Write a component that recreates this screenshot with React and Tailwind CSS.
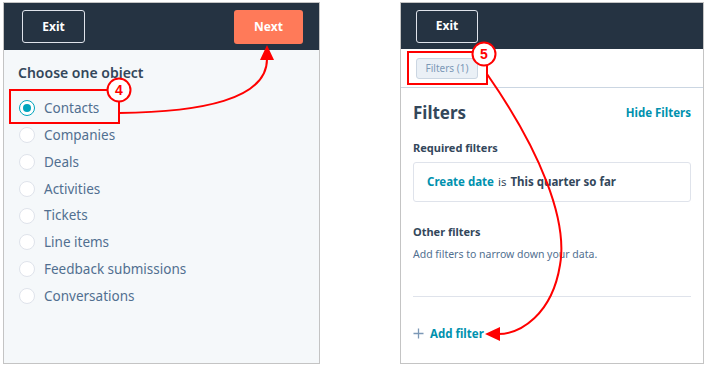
import React from "react";

const items = ["Contacts","Companies","Deals","Activities","Tickets","Line items","Feedback submissions","Conversations"];

function Radio({ checked }) {
  return (
    <span className={"flex h-[16px] w-[16px] shrink-0 items-center justify-center rounded-full border bg-white " + (checked ? "border-[#00a4bd]" : "border-[#dfe3eb]")}>
      {checked && <span className="h-[8px] w-[8px] rounded-full bg-[#00a4bd]" />}
    </span>
  );
}

export default function App() {
  return (
    <div className="relative h-[366px] w-[707px] overflow-hidden bg-white" style={{ fontFamily: '"Noto Sans", "Liberation Sans", sans-serif' }}>
      <div className="flex items-start pl-[3px] pt-[2px]">
        {/* Left panel */}
        <div className="flex h-[362px] w-[317px] flex-col border border-[#c4c4c4] bg-[#f5f8fa]">
          <div className="flex h-[47px] items-center justify-between bg-[#253342] pl-[18px] pr-[16px]">
            <div className="flex h-[33px] w-[63px] items-center justify-center rounded-[3px] border border-[#dfe3eb] text-[12px] font-bold text-white">Exit</div>
            <div className="flex h-[34px] w-[69px] items-center justify-center rounded-[3px] bg-[#ff7a59] text-[12px] font-bold text-white">Next</div>
          </div>
          <div className="px-[14px] pt-[14px]">
            <div className="text-[14px] font-semibold leading-[18px] text-[#33475b]">Choose one object</div>
            <div className="mt-[13px] flex flex-col">
              {items.map((t, i) => (
                <div key={t} className="flex h-[26.8px] items-center gap-[9px] pl-[1px]">
                  <Radio checked={i === 0} />
                  <span className="text-[13.5px] text-[#516f90]">{t}</span>
                </div>
              ))}
            </div>
          </div>
        </div>

        {/* Right panel */}
        <div className="ml-[80px] flex h-[362px] w-[304px] flex-col border border-[#c4c4c4] bg-white">
          <div className="flex h-[46px] items-center bg-[#253342] pl-[15px]">
            <div className="flex h-[33px] w-[62px] items-center justify-center rounded-[3px] border border-[#dfe3eb] text-[12px] font-bold text-white">Exit</div>
          </div>
          <div className="flex h-[39px] items-center border-b border-[#cbd6e2] pl-[15px]">
            <div className="flex h-[21px] w-[62px] items-center justify-center rounded-[3px] border border-[#cbd6e2] bg-[#eaf0f6] text-[10px] text-[#7c98b6]">Filters (1)</div>
          </div>
          <div className="flex flex-1 flex-col px-[12px] pt-[12px]">
            <div className="flex items-center justify-between">
              <span className="text-[17px] font-bold text-[#33475b]">Filters</span>
              <span className="text-[11.5px] font-bold text-[#0091ae]">Hide Filters</span>
            </div>
            <div className="mt-[14px] text-[11px] font-bold text-[#33475b]">Required filters</div>
            <div className="mt-[6px] flex h-[40px] items-center rounded-[3px] border border-[#dfe3eb] pl-[13px] text-[11.5px] text-[#33475b]">
              <span className="font-bold text-[#0091ae]">Create date</span>
              <span className="mx-[4px]">is</span>
              <span className="font-bold">This quarter so far</span>
            </div>
            <div className="mt-[22px] text-[11px] font-bold text-[#33475b]">Other filters</div>
            <div className="mt-[6px] text-[10.5px] text-[#516f90]">Add filters to narrow down your data.</div>
            <div className="mt-[34px] border-t border-[#dfe3eb]" />
            <div className="mt-[28px] flex items-center gap-[6px]">
              <svg width="11" height="11" viewBox="0 0 11 11" className="shrink-0">
                <path d="M5.5 0.5 V10.5 M0.5 5.5 H10.5" stroke="#7c98b6" strokeWidth="1.3" fill="none" />
              </svg>
              <span className="text-[11.5px] font-bold text-[#0091ae]">Add filter</span>
            </div>
          </div>
        </div>
      </div>

      {/* Annotations */}
      <svg className="pointer-events-none absolute left-0 top-0" width="707" height="366" viewBox="0 0 707 366">
        <rect x="10" y="90" width="109" height="33" fill="none" stroke="#ff0000" strokeWidth="2" />
        <path d="M119 113 C 200 112, 268 100, 267 58" fill="none" stroke="#ff0000" strokeWidth="2" />
        <polygon points="267,45 260,60 274,60" fill="#ff0000" />
        <circle cx="119" cy="90" r="11.5" fill="#fff" stroke="#ff0000" strokeWidth="2" />
        <text x="119" y="95" textAnchor="middle" fontSize="14" fontWeight="bold" fill="#ff0000" fontFamily="Liberation Sans, sans-serif">4</text>

        <rect x="408" y="52" width="79" height="32" fill="none" stroke="#ff0000" strokeWidth="2" />
        <path d="M487 74 C 540 150, 568 220, 560 265 C 552 315, 520 334, 498 334" fill="none" stroke="#ff0000" strokeWidth="2" />
        <polygon points="485,334 500,327 500,341" fill="#ff0000" />
        <circle cx="484" cy="54" r="11.5" fill="#fff" stroke="#ff0000" strokeWidth="2" />
        <text x="484" y="59" textAnchor="middle" fontSize="14" fontWeight="bold" fill="#ff0000" fontFamily="Liberation Sans, sans-serif">5</text>
      </svg>
    </div>
  );
}
